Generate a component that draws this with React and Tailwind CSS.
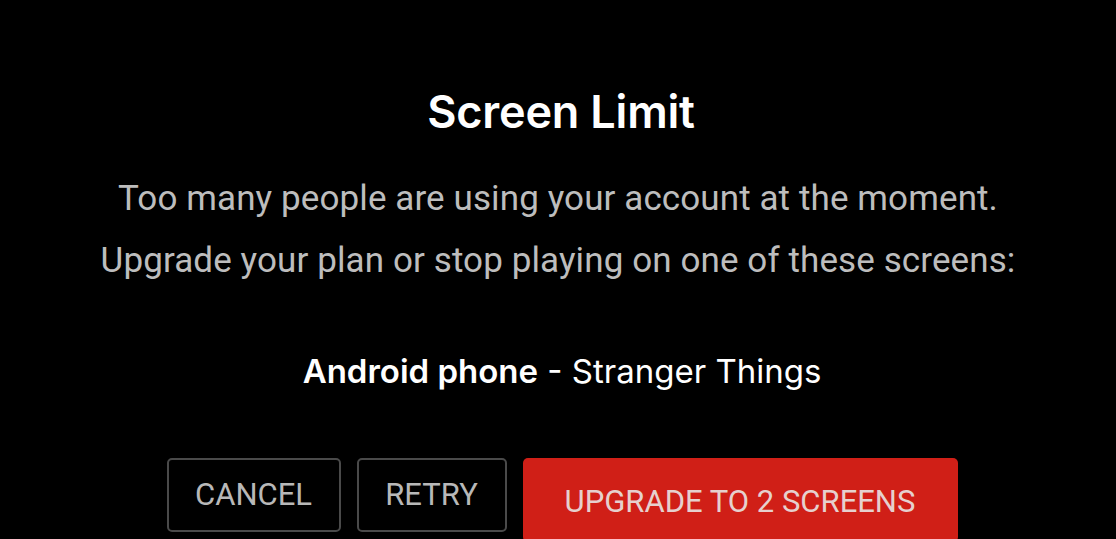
import React from 'react'

// Screen limit dialog shown when too many streams are active
export default function App() {
  return (
    <div className="w-[1116px] h-[539px] overflow-hidden bg-black flex flex-col items-center">
      <h1 className="mt-[86px] ml-[6px] text-[45px] leading-[52px] font-semibold text-white tracking-[-0.2px]" style={{ fontFamily: 'Inter, "Noto Sans", sans-serif' }}>
        Screen Limit
      </h1>

      <div className="mt-[30px] flex flex-col items-center text-[#bdbdbd] text-[35px] leading-[62px] tracking-[0.1px]" style={{ fontFamily: 'Roboto, "Liberation Sans", sans-serif' }}>
        <p>Too many people are using your account at the moment.</p>
        <p>Upgrade your plan or stop playing on one of these screens:</p>
      </div>

      <p className="mt-[59px] ml-[8px] text-[33px] leading-[40px] text-white" style={{ fontFamily: 'Inter, "Noto Sans", sans-serif' }}>
        <span className="font-semibold">Android phone</span> - Stranger Things
      </p>

      <div className="mt-[67px] ml-[8px] flex items-start gap-4" style={{ fontFamily: 'Roboto, "Liberation Sans", sans-serif' }}>
        <button className="w-[174px] h-[74px] rounded-[5px] border-2 border-[#4a4a4a] text-[31px] text-[#b8b8b8]">
          CANCEL
        </button>
        <button className="w-[150px] h-[74px] rounded-[5px] border-2 border-[#4a4a4a] text-[31px] text-[#b8b8b8]">
          RETRY
        </button>
        <button className="w-[435px] h-[84px] rounded-[5px] bg-[#d01f17] text-[31px] text-[#e6d0ce] pt-1">
          UPGRADE TO 2 SCREENS
        </button>
      </div>
    </div>
  )
}
